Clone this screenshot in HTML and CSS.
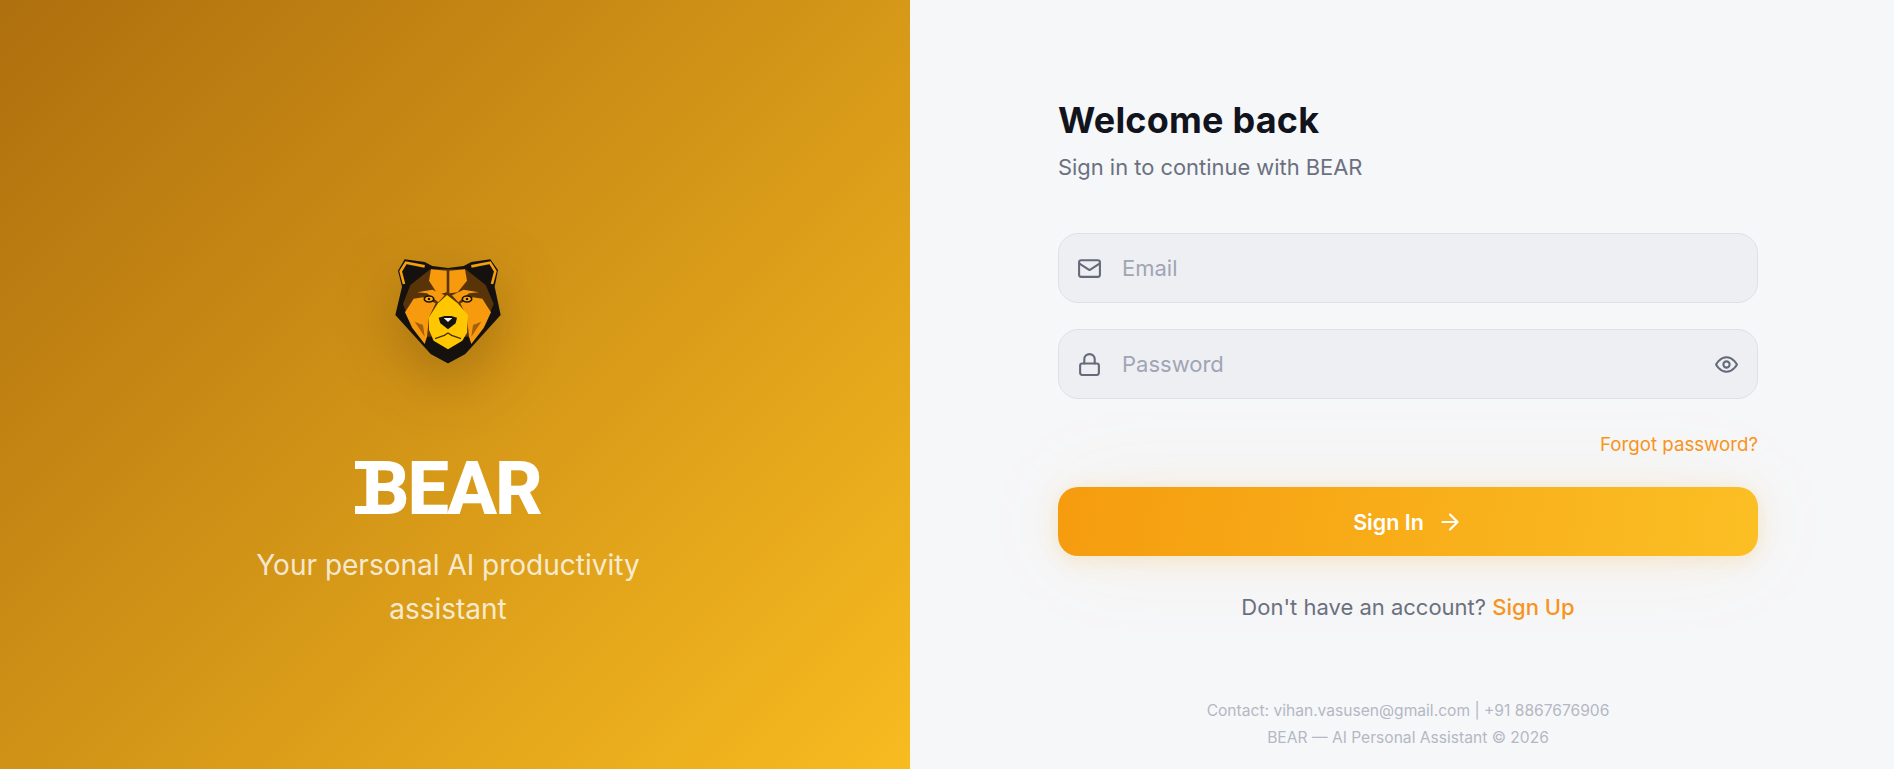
FILE: index.html
```html
<!DOCTYPE html>
<html lang="en">
<head>
    <meta charset="UTF-8">
    <title>BEAR - Sign In</title>
    <meta name="viewport" content="width=device-width, initial-scale=1.0">
    <link rel="stylesheet" href="styles.css">
</head>
<body>
    <div class="page">
        <div class="brand-panel">
            <svg class="bear-logo" viewBox="-5 0 480 420" aria-label="BEAR logo">
                <polygon fill="#15110f" points="105,58 165,66 188,78 235,84 282,78 305,66 362,58 385,90 375,140 393,225 287,342 235,370 183,342 77,225 97,140 85,92"/>
                <polyline fill="none" stroke="#f5a10e" stroke-width="8" points="103,132 93,94 109,68 165,79"/>
                <polyline fill="none" stroke="#f5a10e" stroke-width="8" points="367,132 377,94 361,68 305,79"/>
                <polygon fill="#5a3409" points="100,192 122,135 182,88 288,88 348,135 372,192 345,258 310,290 160,290 125,258"/>
                <polygon fill="#f79a0e" points="184,88 231,92 231,157 205,164 178,122"/>
                <polygon fill="#f79a0e" points="239,92 286,88 292,122 264,157 239,160"/>
                <polygon fill="#f79a0e" points="143,157 188,149 225,166 206,187 172,160"/>
                <polygon fill="#f79a0e" points="327,157 282,149 247,166 266,187 298,160"/>
                <polygon fill="#f79a0e" points="106,217 132,176 160,172 198,190 178,232 172,290 165,312 128,264"/>
                <polygon fill="#f79a0e" points="364,217 338,176 310,172 272,190 292,232 298,290 305,312 342,264"/>
                <polygon fill="#a85f0c" points="135,245 160,255 165,290"/>
                <polygon fill="#a85f0c" points="335,245 310,255 305,290"/>
                <polygon fill="#15110f" points="183,300 195,300 235,330 275,300 287,300 285,342 235,370 185,342"/>
                <polygon fill="#ffc700" points="232,165 264,190 295,225 292,278 278,302 235,328 192,302 178,270 178,232 205,190"/>
                <polygon fill="#15110f" points="207,233 225,228 245,228 262,233 258,250 235,268 212,250"/>
                <polygon fill="#f4f2f0" points="222,234 248,234 235,246"/>
                <polyline fill="none" stroke="#4a2c06" stroke-width="4" points="196,296 224,286 235,279 246,286 274,296"/>
                <ellipse fill="#ffb30f" stroke="#1c130c" stroke-width="5" cx="178" cy="177" rx="14" ry="9"/>
                <ellipse fill="#ffb30f" stroke="#1c130c" stroke-width="5" cx="292" cy="177" rx="14" ry="9"/>
                <circle fill="#1c130c" cx="178" cy="177" r="4"/>
                <circle fill="#1c130c" cx="292" cy="177" r="4"/>
            </svg>
            <h1 class="brand-name">BEAR</h1>
            <p class="brand-tagline">Your personal AI productivity assistant</p>
        </div>

        <div class="auth-panel">
            <div class="auth-form">
                <h2 class="auth-title">Welcome back</h2>
                <p class="auth-subtitle">Sign in to continue with BEAR</p>

                <div class="field">
                    <svg class="field-icon" viewBox="0 0 24 24"><rect x="2" y="4" width="20" height="16" rx="2"/><path d="M22 7l-10 6.500L2 7"/></svg>
                    <input type="text" class="field-input" placeholder="Email">
                </div>
                <div class="field">
                    <svg class="field-icon" viewBox="0 0 24 24"><rect x="3" y="11" width="18" height="11" rx="2"/><path d="M7 11V7a5 5 0 0 1 10 0v4"/></svg>
                    <input type="password" class="field-input" placeholder="Password">
                    <svg class="field-icon" viewBox="0 0 24 24"><path d="M2 12s3.500-7 10-7 10 7 10 7-3.500 7-10 7-10-7-10-7z"/><circle cx="12" cy="12" r="3"/></svg>
                </div>

                <div class="forgot-row"><a href="#" class="accent-link">Forgot password?</a></div>

                <button class="submit-button">
                    Sign In
                    <svg class="submit-arrow" viewBox="0 0 24 24"><path d="M5 12h14M12 5l7 7-7 7"/></svg>
                </button>

                <p class="signup-row">Don't have an account? <a href="#" class="accent-link signup-link">Sign Up</a></p>
            </div>

            <div class="auth-footer">
                <div>Contact: vihan.vasusen@gmail.com | +91 8867676906</div>
                <div>BEAR — AI Personal Assistant © 2026</div>
            </div>
        </div>
    </div>
</body>
</html>
```

FILE: styles.css
```css
* {
    box-sizing: border-box;
}
body {
    margin: 0;
    font-family: Inter, "Liberation Sans", sans-serif;
    background-color: #f6f7f9;
    color: #14161f;
}
.page {
    display: flex;
    height: 100vh;
    overflow: hidden;
}
.brand-panel {
    width: 910px;
    display: flex;
    flex-direction: column;
    align-items: center;
    padding: 240px 14px 0 0;
    background: linear-gradient(135deg, #ae6f0e 0%, #f8bb20 100%);
    color: white;
}
.bear-logo {
    width: 160px;
    height: 140px;
    filter: drop-shadow(0 20px 30px rgba(70, 40, 0, 0.3));
}
.brand-name {
    position: relative;
    margin: 69px 0 0;
    padding-left: 7px;
    font-family: Roboto, Inter, sans-serif;
    font-size: 74px;
    font-weight: 800;
    line-height: 80px;
    letter-spacing: -2px;
}
/* slab serifs on the B */
.brand-name::before {
    content: "";
    position: absolute;
    left: 0;
    top: 12px;
    width: 14px;
    height: 37px;
    border-top: 8px solid white;
    border-bottom: 8px solid white;
}
.brand-tagline {
    width: 440px;
    margin: 14px 0 0;
    font-size: 28px;
    line-height: 44px;
    text-align: center;
    color: rgba(255, 255, 255, 0.8);
}
.auth-panel {
    flex: 1;
    display: flex;
    flex-direction: column;
    align-items: center;
    padding: 96px 0 0 12px;
}
.auth-form {
    width: 700px;
}
.auth-title {
    margin: 0;
    font-size: 36px;
    line-height: 48px;
    font-weight: 700;
    letter-spacing: 0.2px;
    color: #12141d;
}
.auth-subtitle {
    margin: 7px 0 50px;
    font-size: 21.900px;
    line-height: 32px;
    color: #6b7080;
}
.field {
    display: flex;
    align-items: center;
    gap: 20px;
    height: 70px;
    margin-bottom: 26px;
    padding: 0 18px;
    background-color: #eeeff3;
    border: 1px solid #dfe1e7;
    border-radius: 20px;
}
.field-icon {
    flex: 0 0 auto;
    width: 25px;
    height: 25px;
    fill: none;
    stroke: #646a7a;
    stroke-width: 2;
    stroke-linecap: round;
    stroke-linejoin: round;
}
.field-input {
    flex: 1;
    min-width: 0;
    border: none;
    outline: none;
    background: none;
    padding: 0;
    font-family: inherit;
    font-size: 22px;
    color: #14161f;
}
.field-input::placeholder {
    color: #a0a5b3;
}
.forgot-row {
    margin-top: 33px;
    text-align: right;
    font-size: 18.700px;
    line-height: 26px;
}
.accent-link {
    color: #f7941d;
    text-decoration: none;
}
.submit-button {
    display: flex;
    align-items: center;
    justify-content: center;
    gap: 13px;
    width: 100%;
    height: 69px;
    margin-top: 29px;
    border: none;
    border-radius: 20px;
    background: linear-gradient(100deg, #f59c0e 0%, #fbbf24 100%);
    box-shadow: 0 4px 24px rgba(245, 158, 11, 0.2), 0 0 100px rgba(245, 158, 11, 0.07);
    color: white;
    font-family: inherit;
    font-size: 21.500px;
    font-weight: 600;
    cursor: pointer;
}
.submit-arrow {
    width: 26px;
    height: 26px;
    fill: none;
    stroke: white;
    stroke-width: 2;
    stroke-linecap: round;
    stroke-linejoin: round;
}
.signup-row {
    margin: 35px 0 0;
    text-align: center;
    font-size: 22px;
    line-height: 32px;
    color: #6b7080;
}
.signup-link {
    font-weight: 500;
}
.auth-footer {
    margin-top: 74px;
    text-align: center;
    font-size: 15.600px;
    line-height: 27px;
    color: #b4b8c4;
}
```
